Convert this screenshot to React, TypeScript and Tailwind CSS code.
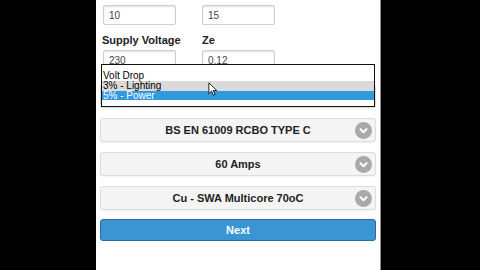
import type { ReactNode } from 'react';

const FONT = "font-['Liberation_Sans',Arial,sans-serif]";

function TextInput({ value }: { value: string }) {
  return (
    <div className="flex h-[20px] w-[73px] items-center rounded-[2px] border border-[#cfcfcf] bg-white pl-[5px] text-[10px] text-[#444] shadow-[inset_0_1px_2px_rgba(0,0,0,0.12)]">
      {value}
    </div>
  );
}

function Chevron() {
  return (
    <span className="flex h-[17px] w-[17px] items-center justify-center rounded-full bg-[#a9a9a9]">
      <svg viewBox="0 0 16 16" width={11} height={11} fill="none" stroke="white" strokeWidth={3} strokeLinecap="round" strokeLinejoin="round">
        <path d="M3.5 6 8 10.5 12.5 6" />
      </svg>
    </span>
  );
}

function SelectBox({ children }: { children: ReactNode }) {
  return (
    <div className="relative flex h-[24px] items-center justify-center rounded-[3px] border border-[#dcdcdc] bg-[#f4f4f4] text-[11px] font-bold text-[#222] shadow-[0_1px_2px_rgba(0,0,0,0.06)]">
      {children}
      <span className="absolute right-[3px] top-[3px]">
        <Chevron />
      </span>
    </div>
  );
}

function Cursor() {
  return (
    <svg viewBox="0 0 12 18" width={10} height={15} className="absolute left-[112px] top-[82px]">
      <path d="M1 1v13l3.2-3 2.3 5 2-1-2.3-4.8H10.5L1 1z" fill="white" stroke="black" strokeWidth={1} strokeLinejoin="round" />
    </svg>
  );
}

export default function App() {
  return (
    <div className={`flex h-[270px] w-[480px] overflow-hidden bg-black ${FONT}`}>
      <div className="w-[96px] shrink-0" />
      <div className="relative w-[284px] shrink-0 bg-white px-[4px] pt-[5px]">
        <div className="flex gap-[26px] pl-[3px]">
          <TextInput value="10" />
          <TextInput value="15" />
        </div>
        <div className="mt-[8px] flex h-[14px] items-center pl-[2px] text-[11px] font-bold text-[#222]">
          <span className="w-[100px]">Supply Voltage</span>
          <span>Ze</span>
        </div>
        <div className="mt-[3px] flex gap-[26px] pl-[3px]">
          <TextInput value="230" />
          <TextInput value="0.12" />
        </div>

        <div className="mt-[14px] flex flex-col gap-[10px]">
          <SelectBox>Volt Drop</SelectBox>
          <SelectBox>BS EN 61009 RCBO TYPE C</SelectBox>
          <SelectBox>60 Amps</SelectBox>
          <SelectBox>Cu - SWA Multicore 70oC</SelectBox>
        </div>
        <div className="mt-[9px] flex h-[22px] items-center justify-center rounded-[3px] border border-[#2b6c98] bg-[#3b95d2] text-[11px] font-bold text-white">
          Next
        </div>

        {/* open native select list */}
        <div className="absolute left-[5px] top-[64px] h-[43px] w-[274px] border border-[#111] bg-white pt-[6px] text-[10px] leading-[10px] text-black">
          <div className="h-[10px] pl-[1px]">Volt Drop</div>
          <div className="h-[10px] bg-[#dadada] pl-[1px]">3% - Lighting</div>
          <div className="h-[9px] bg-[#3399dd] pl-[1px] leading-[9px] text-white">5% - Power</div>
        </div>
        <Cursor />
      </div>
      <div className="w-px shrink-0 bg-[#8a8a8a]" />
    </div>
  );
}
